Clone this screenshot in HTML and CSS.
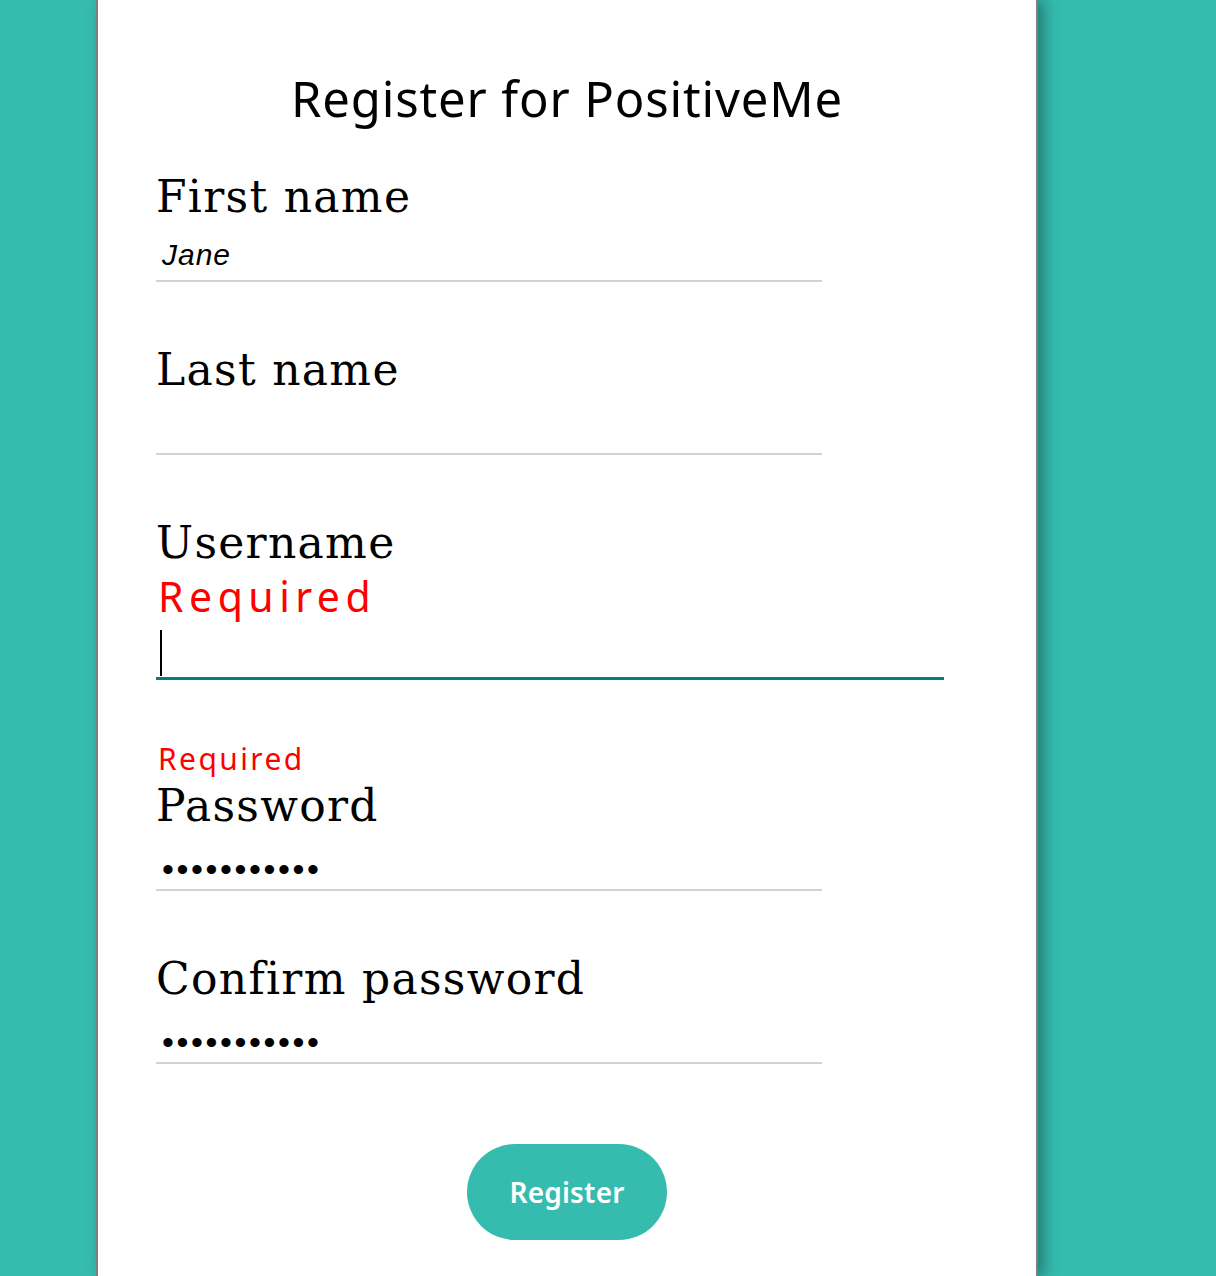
FILE: index.html
```html
<!DOCTYPE html>
<html lang="en">
<head>
<meta charset="utf-8">
<title>Register for PositiveMe</title>
<link rel="stylesheet" href="styles.css">
</head>
<body>
<main class="card">
  <h1 class="title">Register for PositiveMe</h1>
  <form class="form">
    <div class="field">
      <label class="label">First name</label>
      <div class="input"><span class="value italic">Jane</span></div>
    </div>
    <div class="field">
      <label class="label">Last name</label>
      <div class="input"></div>
    </div>
    <div class="field">
      <label class="label">Username</label>
      <div class="error error-lg">Required</div>
      <div class="input input-focus"><span class="caret"></span></div>
    </div>
    <div class="field">
      <div class="error error-sm">Required</div>
      <label class="label">Password</label>
      <div class="input"><span class="value dots">•••••••••••</span></div>
    </div>
    <div class="field">
      <label class="label">Confirm password</label>
      <div class="input"><span class="value dots">•••••••••••</span></div>
    </div>
    <div class="actions">
      <button type="button" class="btn">Register</button>
    </div>
  </form>
</main>
</body>
</html>
```
FILE: styles.css
```css
html, body {
  margin: 0;
  padding: 0;
}
body {
  background: #35bcae;
  height: 1276px;
  overflow: hidden;
}
.card {
  margin-left: 96px;
  width: 880px;
  min-height: 1276px;
  background: #fff;
  border-left: 2px solid #7f7f7f;
  border-right: 2px solid #7f7f7f;
  box-shadow: 6px 0 14px rgba(0, 0, 0, 0.35);
  padding: 1px 0 0 58px;
  box-sizing: content-box;
}
.title {
  margin: 67px 0 0 -58px;
  text-align: center;
  font-family: "Noto Sans", sans-serif;
  font-weight: 400;
  font-size: 49px;
  line-height: 60px;
  letter-spacing: 0.85px;
  color: #000;
}
.form {
  display: flex;
  flex-direction: column;
  margin-top: 43px;
}
.field {
  display: flex;
  flex-direction: column;
  margin-bottom: 62px;
}
.label {
  display: block;
  font-family: "DejaVu Serif", serif;
  font-size: 44px;
  line-height: 52px;
  letter-spacing: 1.3px;
  color: #000;
}
.input {
  width: 666px;
  height: 59px;
  border-bottom: 2px solid #d3d3d3;
  display: flex;
  align-items: flex-end;
  padding: 0 0 9px 6px;
  box-sizing: border-box;
}
.value {
  font-family: "Liberation Sans", sans-serif;
  font-size: 30px;
  line-height: 32px;
  color: #000;
}
.italic {
  font-style: italic;
  letter-spacing: 1px;
}
.dots {
  font-size: 34px;
  letter-spacing: 2.6px;
  line-height: 20px;
  padding-bottom: 1px;
}
.input-focus {
  width: 788px;
  height: 59px;
  border-bottom: 3px solid #008080;
  padding: 0 0 1px 4px;
}
.caret {
  display: block;
  width: 2px;
  height: 46px;
  background: #000;
}
.error {
  font-family: "Noto Sans", sans-serif;
  color: #ff0000;
  margin-left: 2px;
}
.error-lg {
  font-size: 41px;
  line-height: 50px;
  letter-spacing: 5.5px;
  margin-top: 2px;
}
.error-sm {
  font-size: 30px;
  line-height: 34px;
  letter-spacing: 2.4px;
  margin-bottom: 4px;
}
.actions {
  display: flex;
  justify-content: center;
  margin-left: -58px;
  margin-top: 18px;
}
.btn {
  width: 200px;
  height: 96px;
  border: none;
  border-radius: 48px;
  background: #35bcae;
  color: #fff;
  font-family: "Noto Sans", sans-serif;
  font-weight: 600;
  font-size: 28px;
  letter-spacing: 0.2px;
  padding: 0;
}
```
